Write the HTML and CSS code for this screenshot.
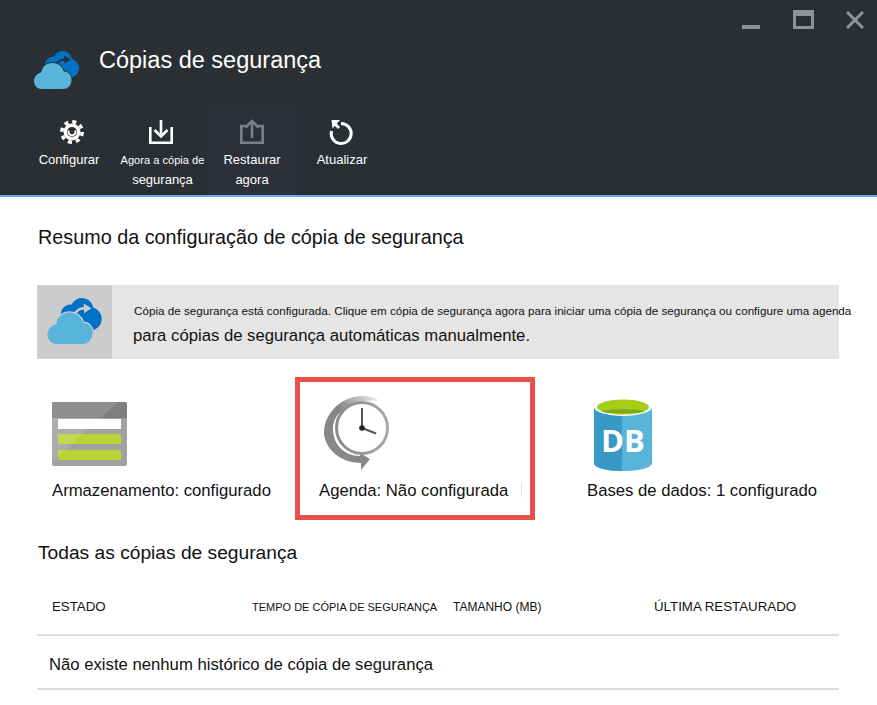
FILE: index.html
```html
<!DOCTYPE html>
<html lang="pt">

<head>
    <meta charset="UTF-8" />
    <title>Cópias de segurança</title>
    <link rel="stylesheet" href="styles.css">
</head>

<body>

    <svg class="defs" width="0" height="0">
        <symbol id="clouds" viewBox="0 0 45 38">
            <path class="cloud-back" d="M11 13C12 8 16 5 20 5.500C22 2 25 0 28.500 0C33 0 37 3 38 8C42 9 45 13 45 17C45 22 42 25.500 37 27L30 27Z" />
            <path class="cloud-gap" d="M21 16C23 11 26 8.500 31 8.500" />
            <path class="cloud-gap-fill" d="M30 4.500L36.500 8.500L30.500 12.500Z" />
            <path class="cloud-front" d="M7 38.500H29C34 38.500 38 34 38 29C38 24 34.500 20 30 20C28.500 15 24 11.500 18.500 11.500C12.500 11.500 7.500 15.500 7 21C3 22 -0.500 26 -0.500 30C-0.500 34.500 3 38.500 7 38.500Z" />
        </symbol>
    </svg>

    <header class="blade-head">
        <div class="win-controls">
            <span class="win-min"></span>
            <span class="win-max"></span>
            <svg class="win-close" viewBox="0 0 18 18"><path d="M1 1L17 17M17 1L1 17" /></svg>
        </div>

        <div class="title-row">
            <svg class="title-icon"><use href="#clouds" /></svg>
            <h1>Cópias de segurança</h1>
        </div>

        <div class="toolbar">
            <div class="tool tool-config">
                <svg viewBox="0 0 24 24">
                    <circle cx="12" cy="12" r="8.500" fill="#fff" />
                    <circle cx="12" cy="12" r="10.200" fill="none" stroke="#fff" stroke-width="3.600" stroke-dasharray="4 4.010" />
                    <circle cx="12" cy="12" r="5" fill="#2a2f33" />
                    <path d="M8.800 10.500A3.500 3.500 0 1 0 15.200 10.500" fill="none" stroke="#fff" stroke-width="2" />
                </svg>
                <span>Configurar</span>
            </div>
            <div class="tool tool-backup">
                <svg viewBox="0 0 24 24" fill="none" stroke="#fff" stroke-width="2.600">
                    <path d="M1.300 7V22.700H22.700V7" />
                    <path d="M12 0V16M5.500 10L12 16.500L18.500 10" />
                </svg>
                <span class="tool-small">Agora a cópia de</span><br><span>segurança</span>
            </div>
            <div class="tool tool-restore">
                <svg viewBox="0 0 24 24" fill="none" stroke="#7c7f84" stroke-width="2.600">
                    <path d="M8 6H1.300V22.700H22.700V6H16" />
                    <path d="M12 18V2M5.500 7.500L12 1L18.500 7.500" />
                </svg>
                <span>Restaurar<br>agora</span>
            </div>
            <div class="tool tool-refresh">
                <svg viewBox="0 0 24 24" fill="none" stroke="#fff" stroke-width="3">
                    <path d="M11 3.500A10 10 0 1 1 1.500 11" />
                    <path d="M5 4L9 8" />
                    <path d="M1.500 0H10L2.500 8.500Z" fill="#fff" stroke="none" />
                </svg>
                <span>Atualizar</span>
            </div>
        </div>
    </header>

    <main class="blade-body">
        <h2 class="summary-title">Resumo da configuração de cópia de segurança</h2>

        <div class="banner">
            <div class="banner-icon">
                <svg class="banner-clouds"><use href="#clouds" /></svg>
            </div>
            <div class="banner-text">
                <p class="banner-small">Cópia de segurança está configurada. Clique em cópia de segurança agora para iniciar uma cópia de segurança ou configure uma agenda</p>
                <p class="banner-large">para cópias de segurança automáticas manualmente.</p>
            </div>
        </div>

        <div class="tiles">
            <div class="tile tile-storage">
                <svg width="75" height="64" viewBox="0 0 75 64">
                    <rect width="75" height="64" rx="2" fill="#a0a1a2" />
                    <path d="M0 2a2 2 0 0 1 2-2H73a2 2 0 0 1 2 2V16H0Z" fill="#7f7f7f" />
                    <rect x="6" y="17" width="63" height="10" fill="#fff" />
                    <rect x="6" y="32" width="63" height="10" fill="#b8d432" />
                    <rect x="6" y="48" width="63" height="10" fill="#b8d432" />
                    <path d="M2 0H66L0 60V2Z" fill="#fff" opacity="0.130" />
                </svg>
                <span>Armazenamento: configurado</span>
            </div>

            <div class="tile tile-schedule">
                <svg width="66" height="74" viewBox="0 0 66 74">
                    <defs>
                        <linearGradient id="sweep" x1="0" y1="1" x2="1" y2="0">
                            <stop offset="0" stop-color="#8c8c8c" />
                            <stop offset="0.550" stop-color="#858585" />
                            <stop offset="1" stop-color="#f4f4f4" />
                        </linearGradient>
                        <linearGradient id="rim" x1="0" y1="0" x2="1" y2="0">
                            <stop offset="0" stop-color="#8b8b8b" />
                            <stop offset="1" stop-color="#a8a8a8" />
                        </linearGradient>
                    </defs>
                    <path d="M56 5C46 -2 28 -2 15 8C5 16 0 26 0 36C0 52 16 67 37 67L37 74L46 63L36 57L36 60C20 60 9 48 9 33C9 16 28 2 56 5Z" fill="url(#sweep)" />
                    <circle cx="38" cy="32" r="25.500" fill="#fff" stroke="url(#rim)" stroke-width="3" />
                    <path d="M38 12V32L52 37.500" fill="none" stroke="#555" stroke-width="2" />
                    <circle cx="38" cy="32" r="2.800" fill="#222" />
                </svg>
                <span>Agenda: Não configurada</span>
                <i class="tile-mark"></i>
            </div>

            <div class="tile tile-db">
                <svg width="58" height="73" viewBox="0 0 58 73">
                    <path d="M0 9V65C0 70 13 73 29 73C45 73 58 70 58 65V9Z" fill="#59b4d9" />
                    <path d="M0 9V65C0 70 13 73 28 73V9Z" fill="#3999c6" />
                    <ellipse cx="29" cy="9" rx="29" ry="9" fill="#fff" />
                    <ellipse cx="29" cy="9" rx="26" ry="7.500" fill="#a5ce1a" />
                    <path d="M7 13.500C13 10.500 45 10.500 51 13.500C45 16 13 16 7 13.500Z" fill="#7fa814" />
                    <text class="db-text" x="29" y="54" text-anchor="middle">DB</text>
                </svg>
                <span>Bases de dados: 1 configurado</span>
            </div>
        </div>

        <h2 class="all-title">Todas as cópias de segurança</h2>

        <div class="table-head">
            <span class="col-big">ESTADO</span>
            <span class="col-small">TEMPO DE CÓPIA DE SEGURANÇA</span>
            <span class="col-size">TAMANHO (MB)</span>
            <span class="col-big">ÚLTIMA RESTAURADO</span>
        </div>
        <div class="table-row">Não existe nenhum histórico de cópia de segurança</div>
    </main>

</body>

</html>
```

FILE: styles.css
```css
* {
    box-sizing: border-box;
}

html,
body {
    height: 705px;
    overflow: hidden;
}

body {
    margin: 0;
    background: #fff;
    color: #111;
    font-family: "Liberation Sans", Arial, sans-serif;
}

.defs {
    position: absolute;
}

/* cloud icon, shared by the title and the banner */
.cloud-back {
    fill: #0072c6;
}

.cloud-gap {
    fill: none;
    stroke: var(--gap);
    stroke-width: 2;
}

.cloud-gap-fill {
    fill: var(--gap);
}

.cloud-front {
    fill: #59b4d9;
    stroke: var(--gap);
    stroke-width: 1;
}

/* dark header */
.blade-head {
    position: relative;
    height: 197px;
    background: #2a2f33;
    border-bottom: 2px solid #6ea8ef;
    color: #fff;
    padding: 51px 0 0 34px;
    --gap: #2a2f33;
}

.win-controls {
    position: absolute;
    top: 10px;
    left: 742px;
    display: flex;
    align-items: flex-start;
}

.win-min {
    width: 18px;
    height: 4px;
    margin-top: 15px;
    background: #8f9396;
}

.win-max {
    width: 21px;
    height: 19px;
    margin-left: 33px;
    border: 3px solid #8f9396;
    border-top-width: 6px;
}

.win-close {
    width: 18px;
    height: 18px;
    margin: 1px 0 0 32px;
    fill: none;
    stroke: #8f9396;
    stroke-width: 3;
}

.title-row {
    display: flex;
    align-items: flex-start;
    height: 54px;
}

.title-icon {
    width: 45px;
    height: 38px;
    overflow: visible;
}

h1 {
    margin: -6px 0 0 20px;
    font-size: 23.500px;
    line-height: 30px;
    font-weight: 400;
}

.toolbar {
    display: flex;
    margin-left: -34px;
    height: 90px;
}

.tool {
    height: 90px;
    padding-top: 15px;
    text-align: center;
    font-size: 13px;
    line-height: 20px;
}

.tool svg {
    display: block;
    width: 24px;
    height: 24px;
    margin: 0 auto 6px;
    overflow: visible;
}

.tool-config {
    width: 70px;
    margin-left: 34px;
}

.tool-config svg {
    margin-left: 26px;
}

.tool-backup {
    width: 103px;
    padding-left: 14px;
}

.tool-backup svg {
    margin-left: 31px;
}

.tool-small {
    font-size: 11.100px;
}

.tool-restore {
    width: 90px;
    background: #2c2f38;
}

.tool-refresh {
    width: 90px;
}

/* white body */
.blade-body {
    padding: 0 38px 0 37px;
    --gap: #ccc;
}

.summary-title {
    margin: 28px 0 0 1px;
    font-size: 19.800px;
    line-height: 24px;
    font-weight: 400;
}

.banner {
    display: flex;
    height: 74px;
    margin-top: 36px;
    background: #e5e5e5;
}

.banner-icon {
    flex: none;
    width: 75px;
    padding: 13px 0 0 10px;
    background: #ccc;
}

.banner-clouds {
    width: 55px;
    height: 46px;
    overflow: visible;
}

.banner-text {
    padding: 18px 0 0 21px;
    white-space: nowrap;
}

.banner-text p {
    margin: 0;
}

.banner-small {
    margin-left: 1px !important;
    font-size: 11.660px;
    line-height: 16px;
}

.banner-large {
    margin-top: 7px !important;
    font-size: 16.700px;
    line-height: 20px;
}

.tiles {
    display: flex;
    height: 143px;
    margin-top: 18px;
}

.tile {
    position: relative;
    display: flex;
    flex-direction: column;
    font-size: 16.700px;
    line-height: 20px;
    white-space: nowrap;
}

.tile span {
    position: absolute;
    top: 104px;
}

.tile svg {
    display: block;
}

.tile-storage {
    width: 258px;
    padding: 25px 0 0 15px;
}

.tile-schedule {
    width: 240px;
    border: 5px solid #e8504a;
    padding: 14px 0 0 24px;
}

.tile-schedule span {
    top: 99px;
    left: 19px;
}

.tile-mark {
    position: absolute;
    top: 100px;
    left: 221px;
    width: 1px;
    height: 15px;
    background: #e6e6e6;
}

.tile-db {
    flex: 1;
    padding: 21px 0 0 59px;
}

.tile-db span {
    left: 52px;
}

.db-text {
    font-family: "Open Sans", "Liberation Sans", sans-serif;
    font-size: 31px;
    font-weight: 700;
    fill: #fff;
}

.all-title {
    margin: 21px 0 0 1px;
    font-size: 19.200px;
    line-height: 24px;
    font-weight: 400;
}

.table-head {
    display: grid;
    grid-template-columns: 200px 201px 201px 1fr;
    align-items: center;
    height: 71px;
    padding: 14px 0 0 15px;
    border-bottom: 2px solid #ddd;
}

.col-big {
    font-size: 13.300px;
}

.col-small {
    font-size: 11px;
}

.col-size {
    padding-top: 1px;
    font-size: 12px;
}

.table-row {
    height: 54px;
    padding: 19px 0 0 12px;
    border-bottom: 2px solid #ddd;
    font-size: 16.700px;
    line-height: 20px;
}
```
